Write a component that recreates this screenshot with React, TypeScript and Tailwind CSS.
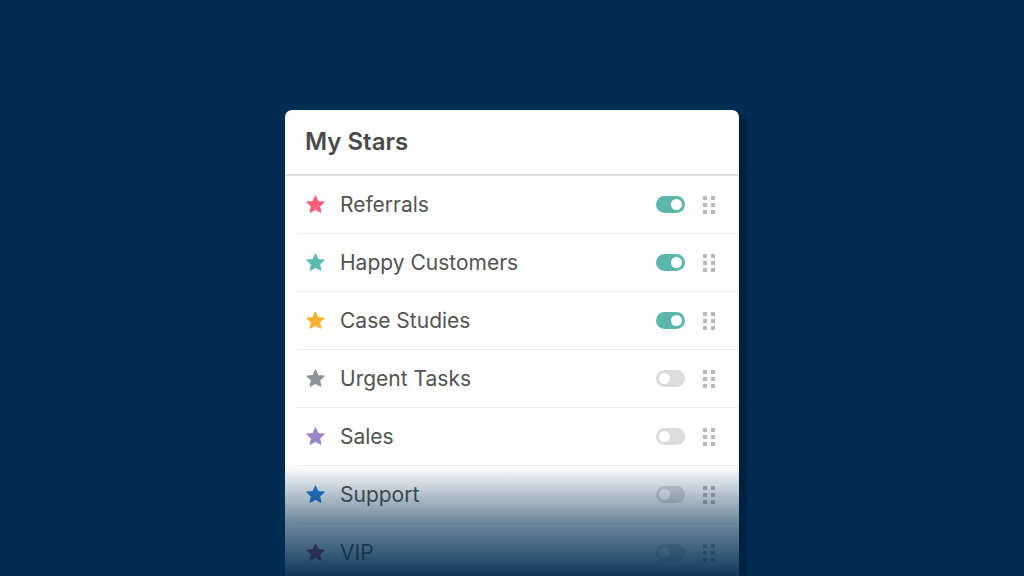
import React from "react";

const rows = [
  { name: "Referrals", color: "#f65f7b", on: true },
  { name: "Happy Customers", color: "#5cbab2", on: true },
  { name: "Case Studies", color: "#f7b233", on: true },
  { name: "Urgent Tasks", color: "#8c9396", on: false },
  { name: "Sales", color: "#9a86c6", on: false },
  { name: "Support", color: "#2d7dd2", on: false },
  { name: "VIP", color: "#b83a5f", on: false },
];

function Star({ color }: { color: string }) {
  return (
    <svg width="21" height="21" viewBox="0 0 24 24" className="shrink-0">
      <path
        d="M12 2.2l2.9 6.3 6.9.8-5.1 4.7 1.4 6.8L12 17.4l-6.1 3.4 1.4-6.8-5.1-4.7 6.9-.8z"
        fill={color}
        stroke={color}
        strokeWidth="1.2"
        strokeLinejoin="round"
      />
    </svg>
  );
}

function Toggle({ on }: { on: boolean }) {
  return on ? (
    <div className="w-[29px] h-[17px] rounded-full bg-[#5bb7ac] flex items-center justify-end pr-[3px]">
      <div className="w-[11px] h-[11px] rounded-full bg-white" />
    </div>
  ) : (
    <div className="w-[29px] h-[17px] rounded-full bg-[#dcdcdc] flex items-center justify-start pl-[3px]">
      <div className="w-[11px] h-[11px] rounded-full bg-white" />
    </div>
  );
}

function Handle() {
  return (
    <div className="grid grid-cols-2 gap-x-[4px] gap-y-[3px] ml-[18px]">
      {Array.from({ length: 6 }).map((_, i) => (
        <div key={i} className="w-[4px] h-[4px] bg-[#b9b9b9]" />
      ))}
    </div>
  );
}

export default function App() {
  return (
    <div
      className="w-[1024px] h-[576px] overflow-hidden bg-[#012d52] flex justify-center pt-[110px]"
      style={{ fontFamily: "Inter, 'Noto Sans', sans-serif" }}
    >
      <div className="relative w-[454px] h-[520px] shrink-0 bg-white rounded-t-[7px] shadow-[8px_4px_0_0_rgba(0,15,35,0.35)] overflow-hidden">
        <div className="h-[66px] border-b-2 border-[#dedede] flex items-center pl-[20px]">
          <span className="text-[24px] font-semibold text-[#4a4a4a]">My Stars</span>
        </div>
        {rows.map((r) => (
          <div key={r.name} className="pl-[12px]">
            <div className="h-[58px] border-b border-[#ececec] flex items-center pl-[8px] pr-[24px]">
              <Star color={r.color} />
              <span className="ml-[14px] text-[21px] text-[#535353] flex-1">{r.name}</span>
              <Toggle on={r.on} />
              <Handle />
            </div>
          </div>
        ))}
        <div className="absolute left-0 right-0 top-[355px] h-[111px] bg-gradient-to-b from-[rgba(1,45,82,0)] via-[rgba(1,45,82,0.55)] to-[rgba(1,45,82,0.95)]" />
      </div>
    </div>
  );
}
